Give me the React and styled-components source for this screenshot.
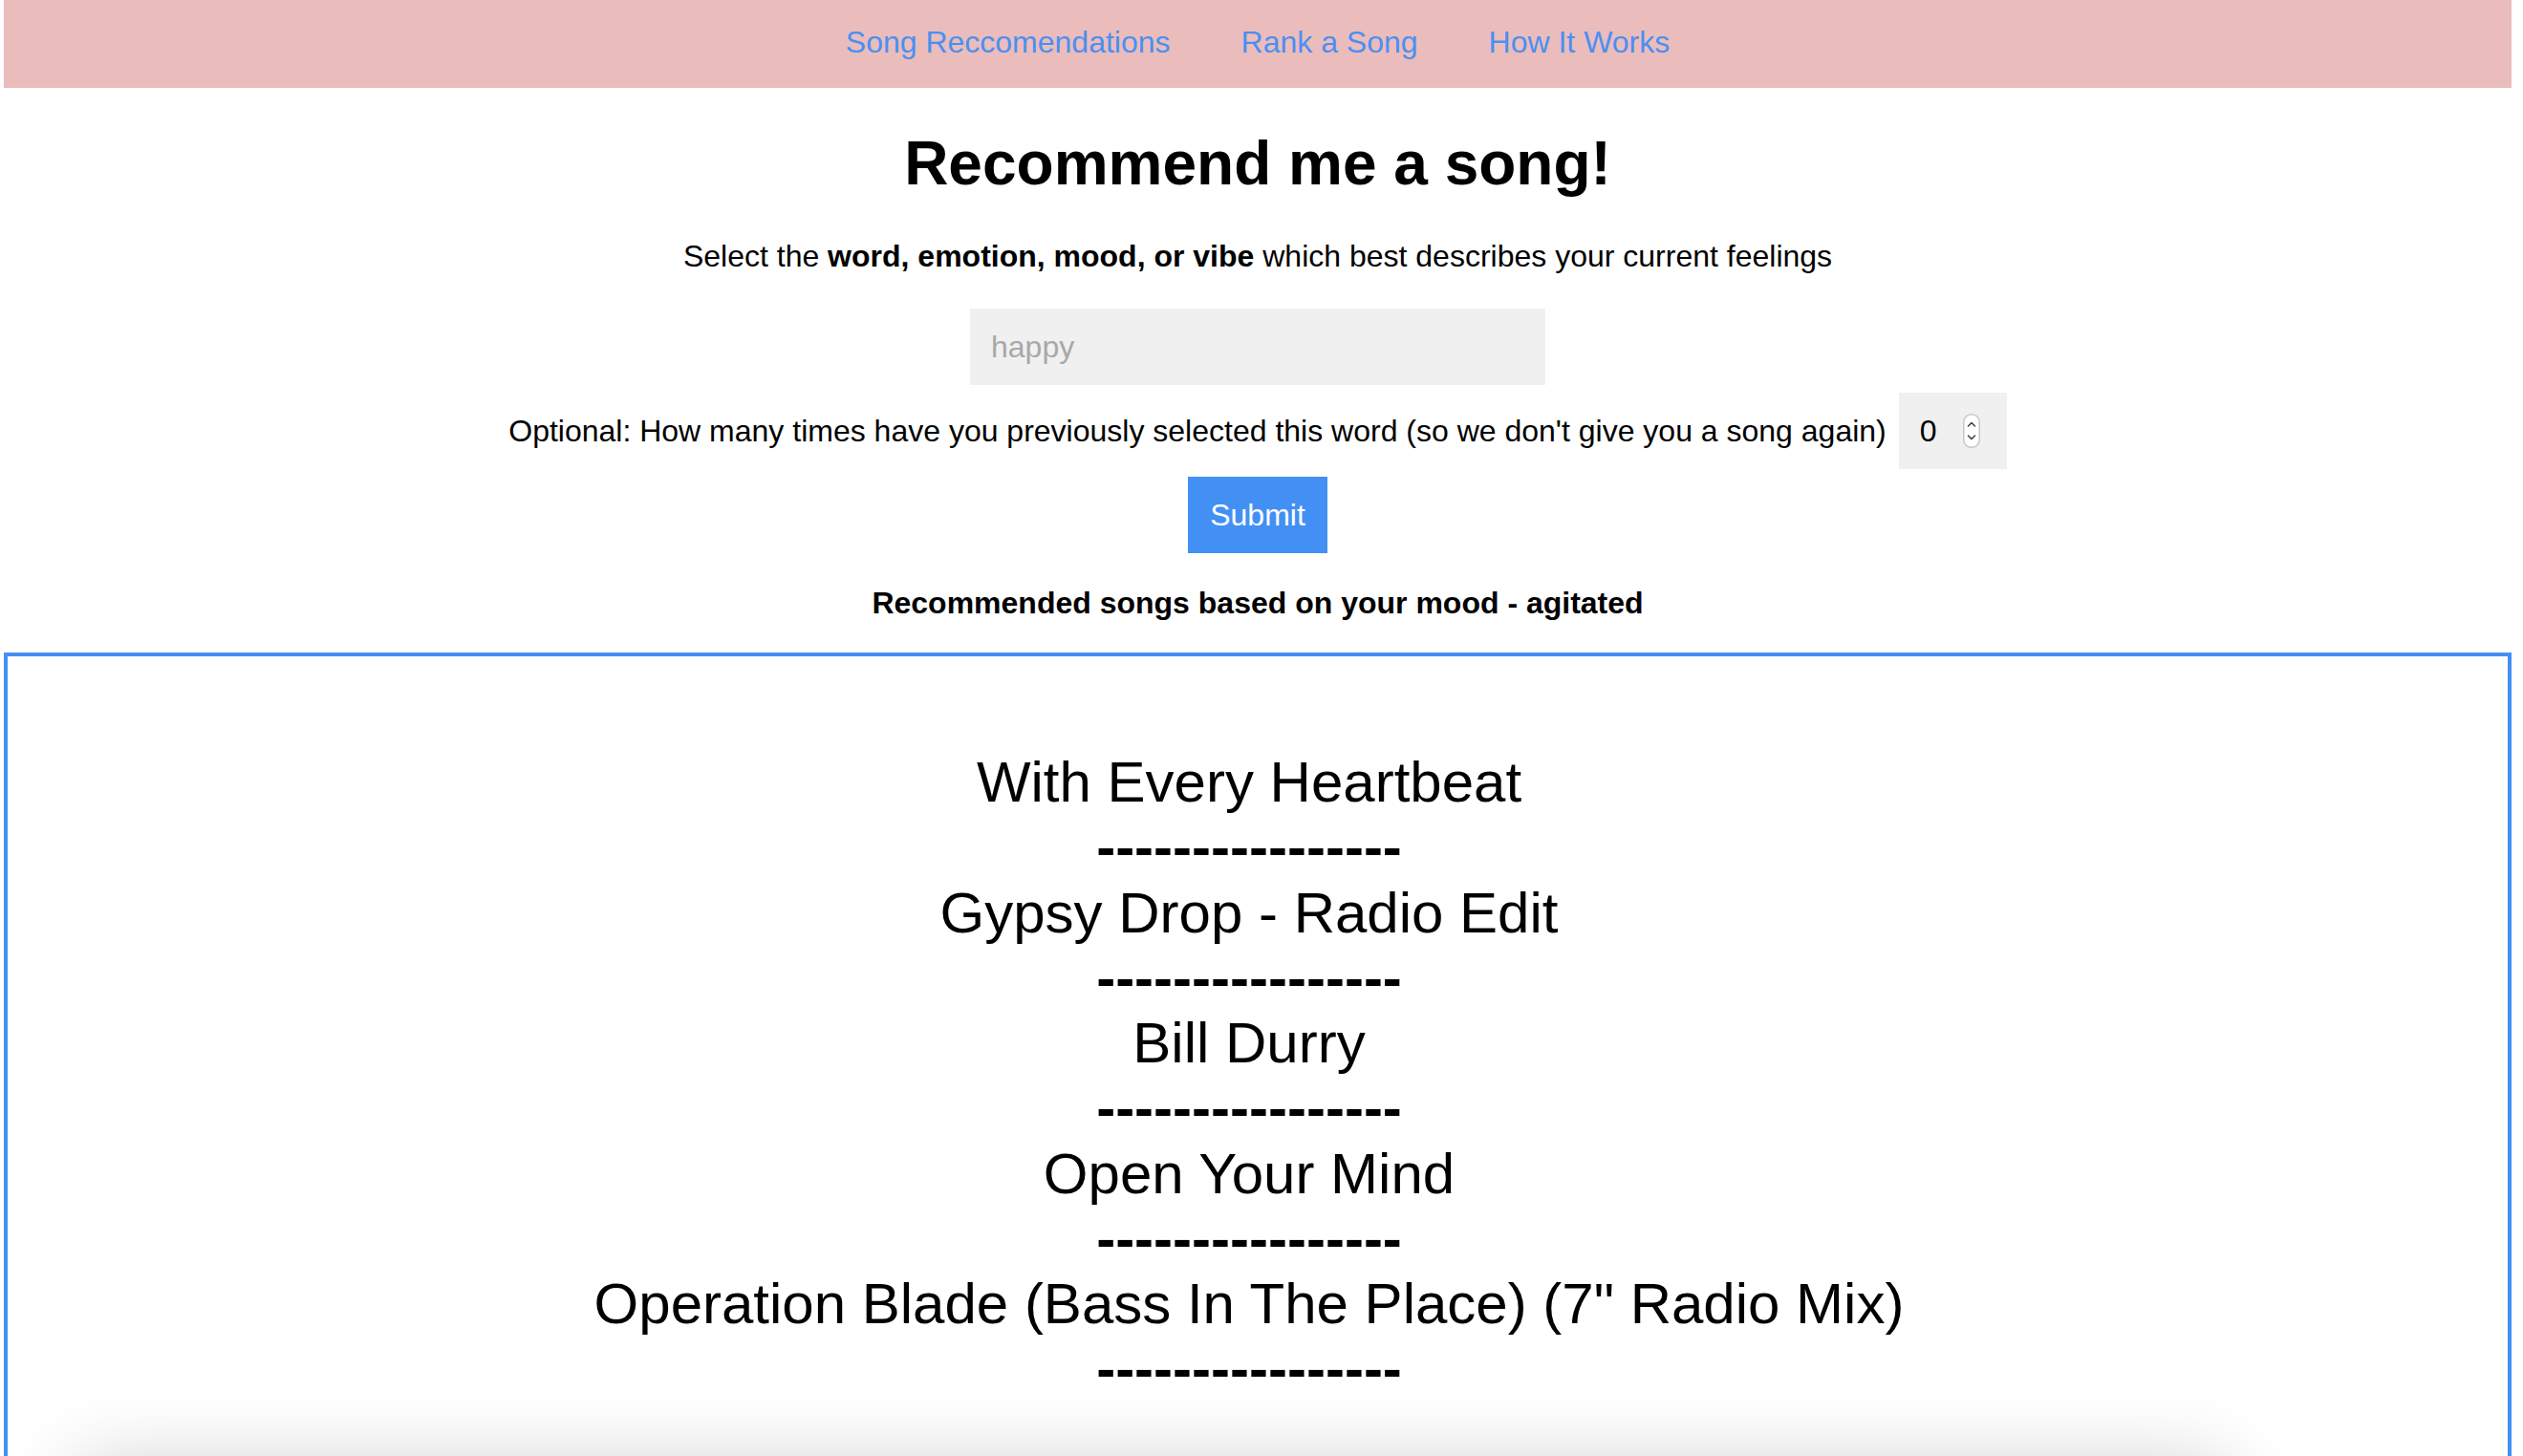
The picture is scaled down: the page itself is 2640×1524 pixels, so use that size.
import React, { useState } from 'react';
import styled, { createGlobalStyle } from 'styled-components';

const SONGS = [
    'With Every Heartbeat',
    'Gypsy Drop - Radio Edit',
    'Bill Durry',
    'Open Your Mind',
    'Operation Blade (Bass In The Place) (7" Radio Mix)',
];

const App = () => {
    const [word, setWord] = useState('');
    const [times, setTimes] = useState('0');

    return (
        <Page>
            <GlobalStyle />
            <NavBar>
                <NavLink href="#">Song Reccomendations</NavLink>
                <NavLink href="#">Rank a Song</NavLink>
                <NavLink href="#">How It Works</NavLink>
            </NavBar>

            <Main>
                <Title>Recommend me a song!</Title>
                <Lead>
                    Select the <b>word, emotion, mood, or vibe</b> which best describes your current feelings
                </Lead>

                <WordInput placeholder="happy" value={word} onChange={e => setWord(e.target.value)} />

                <CountRow>
                    <span>Optional: How many times have you previously selected this word (so we don't give you a song again)</span>
                    <NumberBox>
                        <NumberInput value={times} onChange={e => setTimes(e.target.value)} />
                        <Spinner width="18" height="36" viewBox="0 0 18 36">
                            <rect x="0.75" y="0.75" width="16.5" height="34.5" rx="8" fill="#fff" stroke="#c8c8c8" strokeWidth="1.5" />
                            <path d="M5.5 13 L9 9.5 L12.5 13" fill="none" stroke="#444" strokeWidth="1.6" strokeLinecap="round" strokeLinejoin="round" />
                            <path d="M5.5 23 L9 26.5 L12.5 23" fill="none" stroke="#444" strokeWidth="1.6" strokeLinecap="round" strokeLinejoin="round" />
                        </Spinner>
                    </NumberBox>
                </CountRow>

                <SubmitButton type="button">Submit</SubmitButton>

                <ResultLabel>Recommended songs based on your mood - agitated</ResultLabel>

                <ResultBox>
                    <SongList>
                        {SONGS.map(song => (
                            <React.Fragment key={song}>
                                <Song>{song}</Song>
                                <Divider>----------------</Divider>
                            </React.Fragment>
                        ))}
                    </SongList>
                    <ShadowCard />
                </ResultBox>
            </Main>
        </Page>
    );
};

export default App;

/* ── Styles ──────────────────────────────────────────────────────────────── */

const GlobalStyle = createGlobalStyle`
    html, body {
        margin: 0;
        background: #ffffff;
        font-family: "Liberation Sans", Arial, Helvetica, sans-serif;
        color: #000000;
    }
`;

const Page = styled.div`
    padding: 0 12px 0 4px;
    height: 1524px;
    overflow: hidden;
`;

const NavBar = styled.nav`
    box-sizing: border-box;
    height: 92px;
    padding-bottom: 3px;
    background: #ebbcbc;
    display: flex;
    align-items: center;
    justify-content: center;
    gap: 74px;
`;

const NavLink = styled.a`
    color: #4990f2;
    font-size: 32px;
    text-decoration: none;
`;

const Main = styled.main`
    text-align: center;
`;

const Title = styled.h1`
    font-size: 64px;
    font-weight: 700;
    margin: 42px 0 0;
`;

const Lead = styled.p`
    font-size: 32px;
    margin: 42px 0 0;
`;

const WordInput = styled.input`
    display: block;
    box-sizing: border-box;
    width: 602px;
    height: 80px;
    margin: 36px auto 0;
    padding: 0 22px;
    border: none;
    outline: none;
    background: #f0f0f0;
    font-family: inherit;
    font-size: 32px;

    &::placeholder {
        color: #a8a8a8;
    }
`;

const CountRow = styled.div`
    margin-top: 8px;
    display: flex;
    align-items: center;
    justify-content: center;
    gap: 13px;
    font-size: 32px;
`;

const NumberBox = styled.div`
    box-sizing: border-box;
    width: 113px;
    height: 80px;
    padding: 0 28px 0 22px;
    background: #f0f0f0;
    display: flex;
    align-items: center;
    justify-content: space-between;
`;

const NumberInput = styled.input`
    width: 30px;
    border: none;
    outline: none;
    background: transparent;
    padding: 0;
    font-family: inherit;
    font-size: 32px;
    color: #000;
`;

const Spinner = styled.svg`
    flex-shrink: 0;
`;

const SubmitButton = styled.button`
    display: block;
    margin: 8px auto 0;
    width: 146px;
    height: 80px;
    border: none;
    background: #4390f4;
    color: #ffffff;
    font-family: inherit;
    font-size: 32px;
    cursor: pointer;
`;

const ResultLabel = styled.p`
    font-size: 32px;
    font-weight: 700;
    margin: 34px 0 0;
`;

const ResultBox = styled.section`
    margin-top: 33px;
    border: 4px solid #4390f4;
    padding-top: 98px;
`;

const SongList = styled.div`
    padding-right: 18px;
    display: flex;
    flex-direction: column;
    align-items: center;
`;

const Song = styled.div`
    font-size: 60px;
    line-height: 68.25px;
`;

const Divider = styled.div`
    font-size: 60px;
    font-weight: 700;
    line-height: 68.25px;
`;

/* card just below the fold, only its shadow shows */
const ShadowCard = styled.div`
    margin: 62px 0 0 66px;
    width: 2260px;
    height: 400px;
    border-radius: 30px;
    background: #ffffff;
    box-shadow: 0 0 80px rgba(0, 0, 0, 0.18);
`;
